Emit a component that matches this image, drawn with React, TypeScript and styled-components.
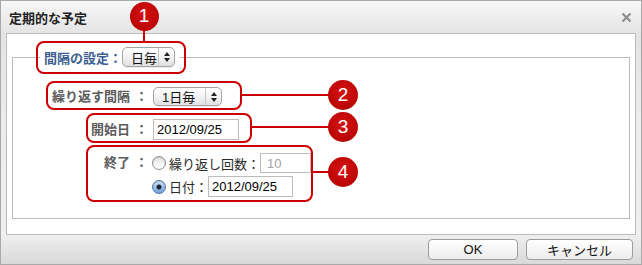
import React from 'react';
import styled, { createGlobalStyle } from 'styled-components';

const GlobalStyle = createGlobalStyle`
  html, body {
    margin: 0;
    padding: 0;
    background: #fff;
  }
  body {
    font-family: "Liberation Sans", "Noto Sans CJK JP", sans-serif;
    font-size: 13px;
    color: #222;
  }
`;

const Page = styled.div`
  position: relative;
  width: 642px;
  height: 265px;
  overflow: hidden;
`;

const Dialog = styled.div`
  box-sizing: border-box;
  width: 642px;
  height: 265px;
  border: 1px solid #a9a9a9;
  display: flex;
  flex-direction: column;
  background: linear-gradient(#f7f7f7 0, #e4e4e4 33px, #ececec 120px, #efefef 234px, #d9d9d9 100%);
`;

const TitleBar = styled.div`
  flex: none;
  height: 32px;
  display: flex;
  align-items: center;
  justify-content: space-between;
  padding: 0 9px 0 8px;
`;

const Title = styled.h1`
  margin: 0;
  font-size: 13px;
  font-weight: bold;
  color: #222;
`;

const Panel = styled.div`
  flex: 1;
  margin: 0 5px;
  background: #fff;
  border: 1px solid #bcbcbc;
  display: flex;
  flex-direction: column;
`;

const Group = styled.fieldset`
  flex: 1;
  min-width: 0;
  margin: 12px 5px 15px;
  padding: 0;
  border: 1px solid #bcbcbc;
`;

const Legend = styled.legend`
  display: flex;
  align-items: center;
  height: 22px;
  margin-left: 27px;
  padding: 0 4px;
  color: #3d5f91;
  font-weight: bold;
`;

const Form = styled.div`
  display: grid;
  grid-template-columns: 117px 23px auto;
  grid-template-rows: 19px 21px auto;
  row-gap: 13px;
  align-items: center;
  margin-top: 19px;
`;

const Label = styled.span<{ $top?: boolean }>`
  align-self: ${p => (p.$top ? 'start' : 'center')};
  line-height: 20px;
  text-align: right;
  font-weight: bold;
  color: #5c5c5c;
`;

const Colon = styled(Label)`
  text-align: center;
`;

const Select = styled.div<{ $width: number; $height: number }>`
  box-sizing: border-box;
  width: ${p => p.$width}px;
  height: ${p => p.$height}px;
  display: flex;
  border: 1px solid #a4a4a4;
  border-radius: 5px;
  background: linear-gradient(#ffffff, #f3f3f3 50%, #e0e0e0);
  box-shadow: 0 1px 1px rgba(0, 0, 0, 0.08);
  color: #111;
  font-weight: normal;
`;

const SelectValue = styled.span`
  flex: 1;
  display: flex;
  align-items: center;
  padding-left: 8px;
`;

const SelectArrows = styled.span`
  width: 15px;
  border-left: 1px solid #c6c6c6;
  display: flex;
  align-items: center;
  justify-content: center;
`;

const TextInput = styled.input<{ $width: number; $muted?: boolean }>`
  box-sizing: border-box;
  width: ${p => p.$width}px;
  height: ${p => (p.$muted ? 20 : 21)}px;
  margin: 0;
  border: 1px solid #bdbdbd;
  padding: 0 3px 0 ${p => (p.$muted ? 6 : 3)}px;
  font: 13px "Liberation Sans", sans-serif;
  color: ${p => (p.$muted ? '#a3a3a3' : '#000')};
  background: #fff;
  outline: none;
`;

const Choices = styled.div`
  display: flex;
  flex-direction: column;
  gap: 3px;
`;

const Choice = styled.label<{ $height: number }>`
  height: ${p => p.$height}px;
  display: flex;
  align-items: center;
  color: #2a2a2a;
`;

const Radio = styled.span<{ $checked?: boolean }>`
  box-sizing: border-box;
  width: 14px;
  height: 14px;
  margin: 0 3px 0 -1px;
  border-radius: 50%;
  border: 1px solid ${p => (p.$checked ? '#4f739f' : '#8e8e8e')};
  background: ${p =>
    p.$checked
      ? 'radial-gradient(circle, #1c2633 0, #1c2633 2px, rgba(0,0,0,0) 3px), linear-gradient(#d2e4f7, #6ea2db)'
      : 'linear-gradient(#e4e4e4, #ffffff)'};
  box-shadow: inset 0 1px 1px rgba(0, 0, 0, 0.15);
`;

const Footer = styled.div`
  flex: none;
  height: 29px;
  box-sizing: border-box;
  display: flex;
  justify-content: flex-end;
  align-items: flex-start;
  gap: 8px;
  padding: 4px 8px 0 0;
`;

const Button = styled.button<{ $width: number }>`
  box-sizing: border-box;
  width: ${p => p.$width}px;
  height: 21px;
  padding: 0;
  border: 1px solid #9c9c9c;
  border-radius: 4px;
  background: linear-gradient(#ffffff, #ececec);
  font: 13px "Liberation Sans", "Noto Sans CJK JP", sans-serif;
  color: #111;
`;

/* annotation overlay */

const Outline = styled.div<{ $x: number; $y: number; $w: number; $h: number }>`
  position: absolute;
  left: ${p => p.$x}px;
  top: ${p => p.$y}px;
  width: ${p => p.$w}px;
  height: ${p => p.$h}px;
  box-sizing: border-box;
  border: 2px solid #cc0000;
  border-radius: 8px;
  pointer-events: none;
`;

const Leader = styled.div<{ $x: number; $y: number; $w: number; $h: number }>`
  position: absolute;
  left: ${p => p.$x}px;
  top: ${p => p.$y}px;
  width: ${p => p.$w}px;
  height: ${p => p.$h}px;
  background: #cc0000;
`;

const Marker = styled.div<{ $x: number; $y: number; $size: number }>`
  position: absolute;
  left: ${p => p.$x - p.$size / 2}px;
  top: ${p => p.$y - p.$size / 2}px;
  width: ${p => p.$size}px;
  height: ${p => p.$size}px;
  border-radius: 50%;
  background: radial-gradient(circle at 50% 40%, #d61212, #b00000);
  color: #fff;
  font: 19px "Liberation Sans", sans-serif;
  display: flex;
  align-items: center;
  justify-content: center;
`;

const Arrows = () => (
  <svg width="6" height="10" viewBox="0 0 6 10">
    <path d="M3 0 L6 4 L0 4 Z" fill="#222" />
    <path d="M0 6 L6 6 L3 10 Z" fill="#222" />
  </svg>
);

const CloseIcon = () => (
  <svg width="11" height="11" viewBox="0 0 11 11">
    <path d="M1.5 1.5 L9.5 9.5 M9.5 1.5 L1.5 9.5" stroke="#8d8d8d" strokeWidth="2.2" />
  </svg>
);

const outlines = [
  { x: 36, y: 41, w: 150, h: 33 },
  { x: 46, y: 81, w: 196, h: 29 },
  { x: 86, y: 113, w: 166, h: 30 },
  { x: 86, y: 145, w: 227, h: 57 },
];

const leaders = [
  { x: 143, y: 28, w: 2, h: 14 },
  { x: 241, y: 94, w: 90, h: 2 },
  { x: 251, y: 126, w: 80, h: 2 },
  { x: 312, y: 171, w: 19, h: 2 },
];

const markers = [
  { n: 1, x: 144, y: 16, size: 29 },
  { n: 2, x: 343, y: 95, size: 30 },
  { n: 3, x: 343, y: 127, size: 30 },
  { n: 4, x: 343, y: 172, size: 30 },
];

export default function App() {
  return (
    <Page>
      <GlobalStyle />
      <Dialog>
        <TitleBar>
          <Title>定期的な予定</Title>
          <CloseIcon />
        </TitleBar>
        <Panel>
          <Group>
            <Legend>
              間隔の設定：
              <Select $width={53} $height={20}>
                <SelectValue>日毎</SelectValue>
                <SelectArrows><Arrows /></SelectArrows>
              </Select>
            </Legend>
            <Form>
              <Label>繰り返す間隔</Label>
              <Colon>：</Colon>
              <Select $width={69} $height={19}>
                <SelectValue>1日毎</SelectValue>
                <SelectArrows><Arrows /></SelectArrows>
              </Select>

              <Label>開始日</Label>
              <Colon>：</Colon>
              <TextInput $width={86} readOnly value="2012/09/25" />

              <Label $top>終了</Label>
              <Colon $top>：</Colon>
              <Choices>
                <Choice $height={20}>
                  <Radio />
                  繰り返し回数：
                  <TextInput $width={51} $muted readOnly value="10" />
                </Choice>
                <Choice $height={21}>
                  <Radio $checked />
                  日付：
                  <TextInput $width={85} readOnly value="2012/09/25" />
                </Choice>
              </Choices>
            </Form>
          </Group>
        </Panel>
        <Footer>
          <Button $width={90}>OK</Button>
          <Button $width={107}>キャンセル</Button>
        </Footer>
      </Dialog>

      {outlines.map((o, i) => (
        <Outline key={i} $x={o.x} $y={o.y} $w={o.w} $h={o.h} />
      ))}
      {leaders.map((l, i) => (
        <Leader key={i} $x={l.x} $y={l.y} $w={l.w} $h={l.h} />
      ))}
      {markers.map(m => (
        <Marker key={m.n} $x={m.x} $y={m.y} $size={m.size}>{m.n}</Marker>
      ))}
    </Page>
  );
}
